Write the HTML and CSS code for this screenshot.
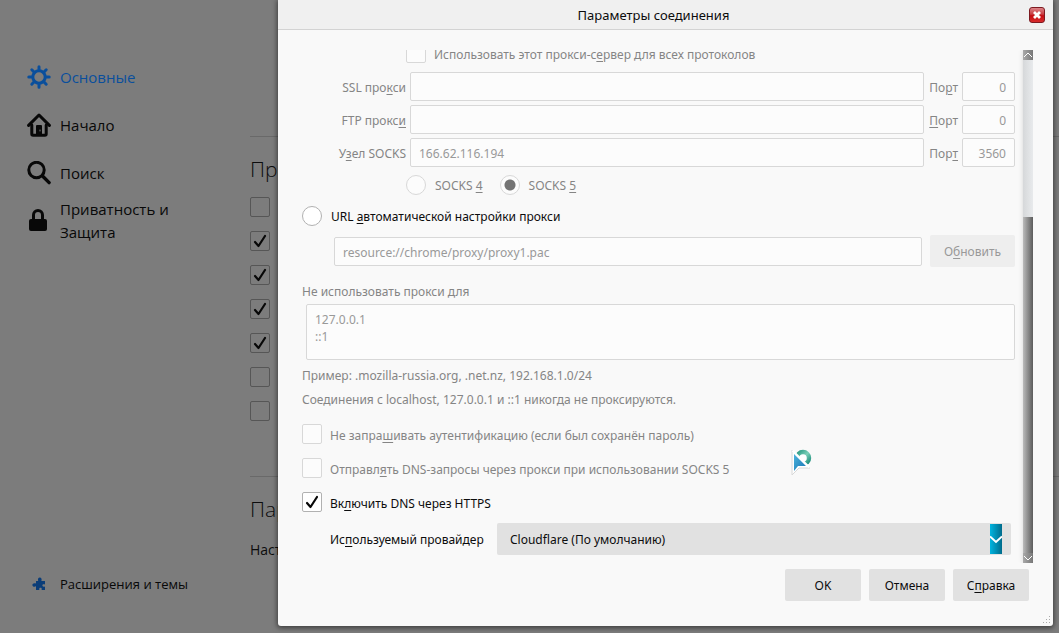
FILE: index.html
```html
<!DOCTYPE html>
<html lang="ru">
<head>
<meta charset="utf-8">
<title>Параметры соединения</title>
<link rel="stylesheet" href="styles.css">
</head>
<body>
<div class="page">
  <nav class="sidebar">
    <a class="nav-item active" href="#general">
      <svg class="nav-icon" viewBox="0 0 24 24" fill="none" stroke="currentColor"><circle cx="12" cy="12" r="6.2" stroke-width="3"/><path stroke-width="3" stroke-linecap="round" d="M12 5V1.800M12 19v3.200M5 12H1.800M19 12h3.200M7 7 4.800 4.800M17 17l2.200 2.200M7 17l-2.200 2.200M17 7l2.200-2.200"/></svg>
      <span>Основные</span>
    </a>
    <a class="nav-item" href="#home">
      <svg class="nav-icon" viewBox="0 0 24 24" fill="none" stroke="currentColor" stroke-linecap="round" stroke-linejoin="round"><path stroke-width="3" d="M1.600 12.400 12 2l10.400 10.400"/><path stroke-width="3" d="M4.800 12v9q0 1.300 1.300 1.300h11.800q1.300 0 1.300-1.300v-9"/><path fill="currentColor" stroke="none" d="M9 22v-9q0-1 1-1h4q1 0 1 1v9z"/><path class="door-knob" stroke-width="1" d="M13 17v1"/></svg>
      <span>Начало</span>
    </a>
    <a class="nav-item" href="#search">
      <svg class="nav-icon" viewBox="0 0 24 24" fill="none" stroke="currentColor" stroke-linecap="round"><circle cx="9.500" cy="9" r="7.700" stroke-width="3"/><path stroke-width="3.400" d="m15.500 15 6.600 6.600"/></svg>
      <span>Поиск</span>
    </a>
    <a class="nav-item" href="#privacy">
      <svg class="nav-icon" viewBox="0 0 24 24"><rect x="2" y="10" width="18" height="12" rx="2" fill="currentColor"/><path fill="none" stroke="currentColor" stroke-width="3" d="M6.500 11V6a4.500 4.500 0 0 1 9 0v5"/></svg>
      <span>Приватность и Защита</span>
    </a>
    <a class="nav-item addons" href="#addons">
      <svg class="addon-icon" viewBox="0 0 14 14"><path fill="currentColor" d="M4 4h2.200C5.500 1.800 6.300.6 7.800.6s2.300 1.200 1.600 3.400H13v3.600c-1.900-.6-2.600.1-2.600.9s.7 1.500 2.600.9V13H9.600c.5-1.700-.2-2.300-1.100-2.300s-1.600.6-1.100 2.300H4V9.300C2 10.300.4 9.300.4 7.900S2 5.700 4 6.500z"/></svg>
      <span>Расширения и темы</span>
    </a>
  </nav>
  <main class="settings">
    <section class="section">
      <h2>Пр</h2>
      <input class="check" type="checkbox" aria-label="Параметр 1">
      <input class="check" type="checkbox" aria-label="Параметр 2" checked>
      <input class="check" type="checkbox" aria-label="Параметр 3" checked>
      <input class="check" type="checkbox" aria-label="Параметр 4" checked>
      <input class="check" type="checkbox" aria-label="Параметр 5" checked>
      <input class="check" type="checkbox" aria-label="Параметр 6">
      <input class="check" type="checkbox" aria-label="Параметр 7">
    </section>
    <section class="section">
      <h2>Пар</h2>
      <p>Наст</p>
    </section>
  </main>
</div>

<div class="overlay">
  <div class="dialog" role="dialog" aria-labelledby="title">
    <header class="titlebar">
      <h1 id="title">Параметры соединения</h1>
      <button class="close" type="button" aria-label="Закрыть"><svg viewBox="0 0 10 10"><path d="m2 2 6 6M8 2 2 8" stroke="#fff" stroke-width="2.800"/></svg></button>
    </header>
    <div class="viewport">
      <form class="form" id="proxy">
        <div class="row all-protocols">
          <input class="check" type="checkbox" id="all" disabled>
          <label for="all">Использовать этот прокси-с<u>е</u>рвер для всех протоколов</label>
        </div>
        <div class="servers">
          <label for="ssl">SSL про<u>к</u>си</label><input class="field" id="ssl" type="text" disabled>
          <label for="sslp">По<u>р</u>т</label><input class="field port" id="sslp" type="text" value="0" disabled>
          <label for="ftp">FTP прокс<u>и</u></label><input class="field" id="ftp" type="text" disabled>
          <label for="ftpp"><u>П</u>орт</label><input class="field port" id="ftpp" type="text" value="0" disabled>
          <label for="socks">У<u>з</u>ел SOCKS</label><input class="field" id="socks" type="text" value="166.62.116.194" disabled>
          <label for="socksp">Пор<u>т</u></label><input class="field port" id="socksp" type="text" value="3560" disabled>
        </div>
        <div class="row versions">
          <input class="radio" type="radio" name="version" id="v4" disabled><label for="v4">SOCKS <u>4</u></label>
          <input class="radio" type="radio" name="version" id="v5" checked disabled><label for="v5">SOCKS <u>5</u></label>
        </div>
        <div class="row auto">
          <input class="radio" type="radio" name="mode" id="auto"><label for="auto">URL <u>а</u>втоматической настройки прокси</label>
        </div>
        <div class="pac">
          <input class="field" type="text" value="resource://chrome/proxy/proxy1.pac" aria-label="URL автоматической настройки прокси" disabled>
          <button class="button" type="button" disabled>О<u>б</u>новить</button>
        </div>
        <label class="bypass-label" for="bypass">Не использовать прокси для</label>
        <textarea class="field bypass" id="bypass" disabled>127.0.0.1
::1</textarea>
        <p class="hint">Пример: .mozilla-russia.org, .net.nz, 192.168.1.0/24</p>
        <p class="hint">Соединения с localhost, 127.0.0.1 и ::1 никогда не проксируются.</p>
        <div class="options">
          <div class="row"><input class="check" type="checkbox" id="auth" disabled><label for="auth">Не запра<u>ш</u>ивать аутентификацию (если был сохранён пароль)</label></div>
          <div class="row"><input class="check" type="checkbox" id="dns" disabled><label for="dns">Отправл<u>я</u>ть DNS-запросы через прокси при использовании SOCKS 5</label></div>
          <div class="row"><input class="check" type="checkbox" id="doh" checked><label for="doh">Вк<u>л</u>ючить DNS через HTTPS</label></div>
        </div>
        <div class="provider">
          <label for="provider">Ис<u>п</u>ользуемый провайдер</label>
          <select id="provider"><option>Cloudflare (По умолчанию)</option></select>
        </div>
      </form>
      <div class="scrollbar" aria-hidden="true">
        <svg class="arrow" viewBox="0 0 10 10"><path d="m1 7 4-4 4 4"/></svg>
        <div class="thumb"></div>
        <svg class="arrow" viewBox="0 0 10 10"><path d="m1 3 4 4 4-4"/></svg>
      </div>
    </div>
    <footer class="actions">
      <button class="button" type="submit" form="proxy">OK</button>
      <button class="button" type="button">Отмена</button>
      <button class="button" type="button">С<u>п</u>равка</button>
    </footer>
    <svg class="grip" viewBox="0 0 8 8" fill="#aaa"><path d="M6 0h1v1H6zM3 3h1v1H3zM6 3h1v1H6zM0 6h1v1H0zM3 6h1v1H3zM6 6h1v1H6z"/></svg>
  </div>
</div>

<svg class="cursor" viewBox="0 0 24 30">
  <defs>
    <linearGradient id="arrow-fill" x1="0" y1="0" x2="1" y2="1"><stop offset="0" stop-color="#4cb4dc"/><stop offset="1" stop-color="#1874b4"/></linearGradient>
    <linearGradient id="ring-fill" x1="0" y1="0" x2="1" y2="1"><stop offset="0" stop-color="#2a9a84"/><stop offset=".5" stop-color="#7ccfb8"/><stop offset="1" stop-color="#168a78"/></linearGradient>
  </defs>
  <circle cx="13" cy="10" r="6" fill="#fff" stroke="url(#ring-fill)" stroke-width="4.400"/>
  <path d="M2 2v25l7-7h11z" fill="#fff" stroke="#d8d8d8" stroke-width="1"/>
  <path d="M2.500 2.500 19.500 19.500" stroke="#fff" stroke-width="2"/>
  <path d="M4 6v17l4-5h8z" fill="url(#arrow-fill)"/>
</svg>
</body>
</html>
```
FILE: styles.css
```css
* { box-sizing: border-box; }

body {
  margin: 0;
  min-height: 100vh;
  position: relative;
  overflow: hidden;
  background: #7c7c7c;
  color: #0c0c0d;
  font: 13px/20px "Open Sans", "Noto Sans", sans-serif;
}

h1, h2, p { margin: 0; font-weight: 400; }
u { text-underline-offset: 2px; }
button, input, select, textarea { font: inherit; color: inherit; margin: 0; }

.page { display: flex; min-height: 100vh; }

.sidebar {
  width: 250px;
  flex: none;
  display: flex;
  flex-direction: column;
  padding: 53px 60px 25px 27px;
}

.nav-item {
  display: flex;
  align-items: center;
  gap: 9px;
  height: 48px;
  color: #080808;
  font-size: 15px;
  line-height: 23px;
  text-decoration: none;
}

.nav-item.active { color: #0a4f9c; }
.nav-icon { width: 24px; height: 24px; flex: none; }
.door-knob { stroke: #7c7c7c; }
.addons { margin-top: auto; font-size: 13px; white-space: nowrap; }
.addon-icon { width: 14px; height: 14px; margin: 0 5px; flex: none; color: #0b3d78; }

.settings { flex: 1; padding-top: 136px; }

.section {
  display: flex;
  flex-direction: column;
  align-items: flex-start;
  gap: 14px;
  height: 340px;
  padding-top: 18px;
  border-top: 1px solid #696969;
}

.section + .section { height: auto; }
.section h2 { font-size: 21px; line-height: 28px; font-weight: 300; }
.section p { font-size: 14px; line-height: 26px; }

.check, .radio {
  appearance: none;
  width: 20px;
  height: 20px;
  flex: none;
  border: 1px solid #b1b1b1;
  border-radius: 2px;
  background: #fff center / 18px 18px no-repeat;
}

.settings .check { background-color: transparent; border-color: #565656; }

.check:checked {
  background-image: url("data:image/svg+xml,%3Csvg xmlns='http://www.w3.org/2000/svg' viewBox='0 0 18 18'%3E%3Cpath d='M4 10l3.500 4L14 4' fill='none' stroke='%23080808' stroke-width='2.200' stroke-linecap='round' stroke-linejoin='round'/%3E%3C/svg%3E");
}

.radio { border-radius: 50%; }
.radio:checked { background-image: radial-gradient(circle, #737373 5px, transparent 6px); }
.check:disabled, .radio:disabled { border-color: #d8d8d8; background-color: #fcfcfc; }
:disabled + label, .servers label { color: #858585; }

.overlay {
  position: absolute;
  inset: 0;
  display: flex;
  padding: 0 6px 7px 278px;
}

.dialog {
  position: relative;
  flex: 1;
  min-width: 0;
  display: flex;
  flex-direction: column;
  background: #f9f9f9;
  border-radius: 0 0 3px 3px;
  box-shadow: 0 1px 5px 1px rgba(0, 0, 0, .5);
  font-family: "Noto Sans", "Open Sans", sans-serif;
  font-size: 12px;
}

.titlebar {
  display: flex;
  align-items: center;
  height: 30px;
  padding-right: 8px;
  background: #f0f0f0;
  border-bottom: 1px solid #d3d3d3;
}

.titlebar h1 { flex: 1; text-align: center; font-size: 13px; line-height: 20px; }

.close {
  display: grid;
  place-items: center;
  width: 16px;
  height: 16px;
  padding: 0;
  border: 1px solid #7c1a20;
  border-radius: 3px;
  background: linear-gradient(#dc8488, #c83a40 45%, #c40c12 55%, #d82c2c);
}

.close svg { width: 10px; height: 10px; }

.viewport {
  display: flex;
  justify-content: space-between;
  gap: 8px;
  height: 513px;
  margin: 20px 20px 0 24px;
  overflow: hidden;
}

.form { flex: 1; min-width: 0; margin-top: -7px; }
.form label { padding-top: 2px; }
.row { display: flex; align-items: center; gap: 8px; height: 20px; }
.row label { line-height: 20px; }
.all-protocols { margin-left: 104px; }
.form .options label, .form .all-protocols label { padding-top: 4px; }

.servers {
  display: grid;
  grid-template-columns: 104px 1fr 30px 53px;
  gap: 4px;
  align-items: center;
  margin-top: 9px;
}

.servers label { text-align: right; }

.field {
  width: 100%;
  height: 29px;
  min-width: 0;
  padding: 2px 8px 0;
  border: 1px solid #d8d8d8;
  border-radius: 2px;
  background: #fcfcfc;
  color: #999;
}

.port { text-align: right; }
.versions { gap: 9px; margin: 8px 0 0 104px; }
.versions label + .radio { margin-left: 8px; }
.auto { gap: 9px; margin-top: 11px; }
.pac { display: flex; align-items: center; gap: 8px; margin: 9px 0 0 32px; }

.button {
  width: 76px;
  height: 32px;
  padding: 2px 0 0;
  border: 0;
  border-radius: 2px;
  background: #e1e1e1;
}

.pac .button { width: 85px; flex: none; background: #eee; color: #999; }
.bypass-label { display: block; margin-top: 13px; color: #858585; }

.bypass {
  display: block;
  width: calc(100% - 4px);
  height: 56px;
  margin: 2px 0 6px 4px;
  padding: 6px 8px;
  line-height: 17px;
  resize: none;
}

.hint { color: #858585; margin-bottom: 4px; }
.options { display: grid; gap: 14px; margin-top: 14px; }
.provider { display: flex; align-items: center; gap: 8px; margin: 11px 4px 0 28px; }
.provider label { width: 159px; }

.provider select {
  appearance: none;
  flex: 1;
  min-width: 0;
  height: 32px;
  padding: 2px 32px 0 13px;
  border: 0;
  border-radius: 2px;
  background:
    url("data:image/svg+xml,%3Csvg xmlns='http://www.w3.org/2000/svg' viewBox='0 0 12 30'%3E%3Cpath d='M0 12.500l6 5.500 6-5.500' fill='none' stroke='white' stroke-width='2'/%3E%3C/svg%3E") right 9px center / 12px 30px no-repeat,
    linear-gradient(90deg, #00b4e0, #006c8c) right 9px center / 12px 30px no-repeat,
    #e1e1e1;
}

.scrollbar {
  width: 10px;
  flex: none;
  display: flex;
  flex-direction: column;
  justify-content: space-between;
  background: linear-gradient(90deg, #d6d8da, #e8eaec);
  box-shadow: 0 0 5px rgba(0, 0, 0, .15);
}

.arrow {
  width: 10px;
  height: 10px;
  flex: none;
  fill: none;
  stroke: #fff;
  background: linear-gradient(90deg, #aaa, #777);
}

.thumb {
  flex: 1;
  margin-top: 157px;
  background: linear-gradient(90deg, #bbb, #5c5c5c);
}

.actions { display: flex; justify-content: flex-end; gap: 8px; padding: 6px 24px 0; }

.grip { position: absolute; right: 2px; bottom: 2px; width: 8px; height: 8px; }

.cursor { position: absolute; left: 790px; top: 448px; width: 24px; height: 30px; }
```
